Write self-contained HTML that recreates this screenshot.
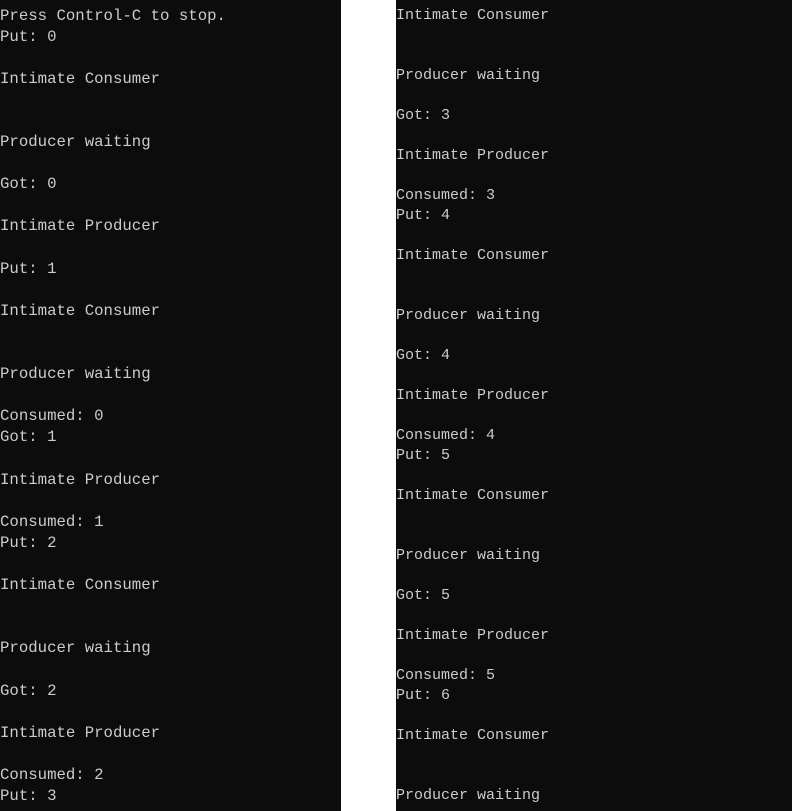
<!DOCTYPE html>
<html><head><style>
html,body{margin:0;padding:0;width:792px;height:811px;background:#fff;overflow:hidden}
.p{position:absolute;top:0;height:811px;background:#0c0c0c;overflow:hidden}
pre{margin:0;position:absolute;left:0;color:#cccccc;font-family:"Liberation Mono",monospace;white-space:pre}
</style></head><body>
<div class="p" style="left:0;width:341px">
<pre style="top:5.5px;font-size:15.7px;line-height:21.1px">Press Control-C to stop.
Put: 0

Intimate Consumer


Producer waiting

Got: 0

Intimate Producer

Put: 1

Intimate Consumer


Producer waiting

Consumed: 0
Got: 1

Intimate Producer

Consumed: 1
Put: 2

Intimate Consumer


Producer waiting

Got: 2

Intimate Producer

Consumed: 2
Put: 3</pre>
</div>
<div class="p" style="left:396px;width:396px">
<pre style="top:6px;font-size:15px;line-height:20px">Intimate Consumer


Producer waiting

Got: 3

Intimate Producer

Consumed: 3
Put: 4

Intimate Consumer


Producer waiting

Got: 4

Intimate Producer

Consumed: 4
Put: 5

Intimate Consumer


Producer waiting

Got: 5

Intimate Producer

Consumed: 5
Put: 6

Intimate Consumer


Producer waiting</pre>
</div>
</body></html>
